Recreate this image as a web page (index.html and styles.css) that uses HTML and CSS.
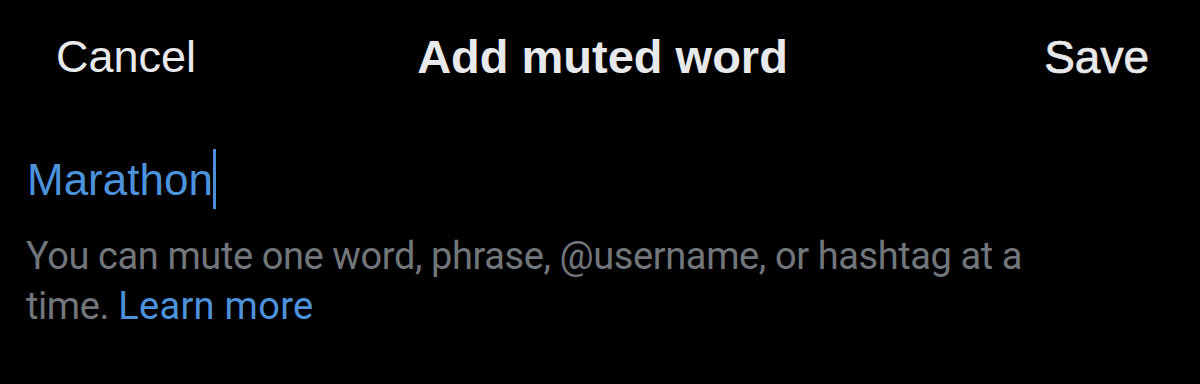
FILE: index.html
```html
<!DOCTYPE html>
<html lang="en">

<head>
  <meta charset="UTF-8">
  <meta name="viewport" content="width=device-width, initial-scale=1.0">
  <title>Add muted word</title>
  <link rel="stylesheet" href="styles.css">
</head>

<body>
  <div class="sheet">
    <div class="sheet__header">
      <button class="header__btn header__btn--cancel">Cancel</button>
      <div class="header__title">Add muted word</div>
      <button class="header__btn header__btn--save">Save</button>
    </div>
    <div class="word__input">Marathon<span class="caret"></span></div>
    <p class="word__hint">You can mute one word, phrase, @username, or hashtag at a time. <a href="#" class="hint__link">Learn more</a></p>
  </div>
</body>

</html>
```

FILE: styles.css
```css
body {
  margin: 0;
  background: #000;
  font-family: "Liberation Sans", Arial, Helvetica, sans-serif;
  color: #e7e9ea;
}

.sheet {
  height: 384px;
  overflow: hidden;
}

.sheet__header {
  display: grid;
  grid-template-columns: 1fr auto 1fr;
  align-items: center;
  padding: 29px 51px 0 56px;
}

.header__btn {
  border: none;
  background: none;
  padding: 0;
  font-family: inherit;
  font-size: 46px;
  line-height: 1.2;
  color: #e7e9ea;
}

.header__btn--cancel {
  justify-self: start;
  font-size: 45px;
}

.header__btn--save {
  justify-self: end;
  -webkit-text-stroke: 0.7px #e7e9ea;
}

.header__title {
  font-size: 47px;
  line-height: 1.2;
  font-weight: 700;
}

.word__input {
  margin-top: 64px;
  padding-left: 27px;
  font-size: 44px;
  line-height: 1.2;
  color: #4d92dc;
}

.caret {
  display: inline-block;
  width: 3px;
  height: 60px;
  vertical-align: -14px;
  background: #4a8fd8;
}

.word__hint {
  margin: 22px 0 0;
  padding: 0 100px 0 26px;
  font-family: Roboto, "Liberation Sans", sans-serif;
  font-size: 38px;
  letter-spacing: -0.4px;
  line-height: 50px;
  color: #71767b;
}

.hint__link {
  color: #4d92dc;
  letter-spacing: 0.3px;
  text-decoration: none;
}
```
